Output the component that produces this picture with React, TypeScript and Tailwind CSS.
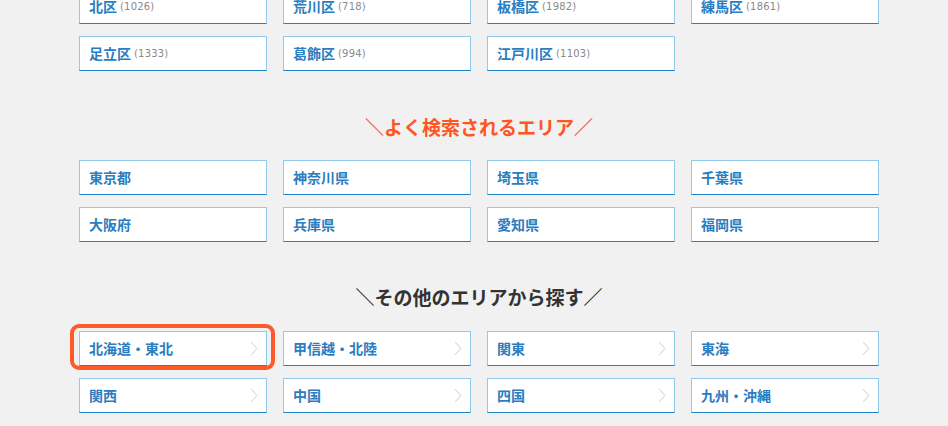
const WARDS = [
  { name: "北区", count: 1026 },
  { name: "荒川区", count: 718 },
  { name: "板橋区", count: 1982 },
  { name: "練馬区", count: 1861 },
  { name: "足立区", count: 1333 },
  { name: "葛飾区", count: 994 },
  { name: "江戸川区", count: 1103 },
];

const POPULAR = ["東京都", "神奈川県", "埼玉県", "千葉県", "大阪府", "兵庫県", "愛知県", "福岡県"];

const REGIONS = ["北海道・東北", "甲信越・北陸", "関東", "東海", "関西", "中国", "四国", "九州・沖縄"];

const box =
  "h-[35px] flex items-center px-[9px] bg-white border border-[#93c9ea] border-b-[#1f84c6] text-[14px] font-bold text-[#2a7dc0]";

export default function App() {
  return (
    <div
      className="w-[948px] h-[426px] overflow-hidden bg-[#f1f1f1]"
      style={{ fontFamily: '"Noto Sans CJK JP", "Noto Sans", sans-serif' }}
    >
      <div className="w-[800px] ml-[79px] -mt-[11px]">
        {/* wards */}
        <div className="grid grid-cols-4 gap-x-4 gap-y-3">
          {WARDS.map((w) => (
            <a key={w.name} className={box}>
              <span>{w.name}</span>
              <span
                className="ml-[3px] text-[10px] font-normal text-[#8a8a8a] tracking-[0.02em]"
                style={{ fontFamily: '"DejaVu Sans", "Noto Sans CJK JP", sans-serif' }}
              >
                ({w.count})
              </span>
            </a>
          ))}
        </div>

        {/* popular */}
        <h2 className="mt-[44px] mb-[21px] text-center text-[19px] leading-6 font-bold text-[#ff5522]">
          ＼よく検索されるエリア／
        </h2>
        <div className="grid grid-cols-4 gap-x-4 gap-y-3">
          {POPULAR.map((p) => (
            <a key={p} className={box}>
              {p}
            </a>
          ))}
        </div>

        {/* other regions */}
        <h2 className="mt-[43px] mb-[22px] text-center text-[19px] leading-6 font-bold text-[#333333]">
          ＼その他のエリアから探す／
        </h2>
        <div className="grid grid-cols-4 gap-x-4 gap-y-3">
          {REGIONS.map((r, i) => (
            <div key={r} className="relative">
              <a className={box + " justify-between pr-[8px]"}>
                <span>{r}</span>
                <svg width="8" height="15" viewBox="0 0 8 15" fill="none">
                  <polyline points="1,1 7,7.5 1,14" stroke="#cdcdcd" strokeWidth="1" />
                </svg>
              </a>
              {i === 0 && (
                <div className="absolute -left-[9px] -top-[7px] w-[205px] h-[46px] rounded-[9px] border-[4px] border-[#ff5a2a]" />
              )}
            </div>
          ))}
        </div>
      </div>
    </div>
  );
}
